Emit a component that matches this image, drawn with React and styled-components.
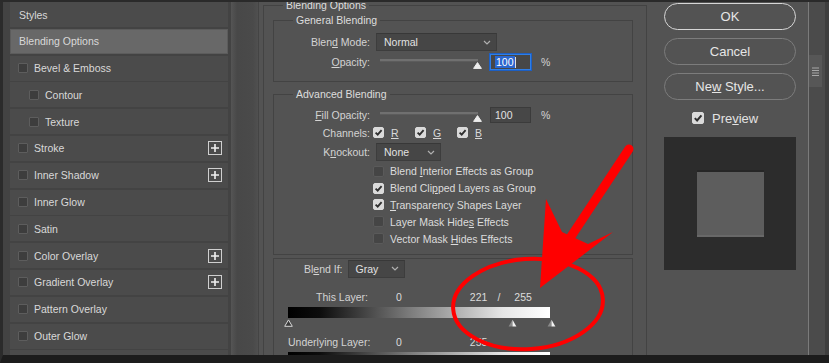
import React from 'react';
import styled, { createGlobalStyle } from 'styled-components';

const GlobalStyle = createGlobalStyle`
  html, body {
    margin: 0;
    padding: 0;
    background: #1b1b1b;
  }
  body {
    font-family: "Liberation Sans", Arial, sans-serif;
  }
`;

// whole dialog, cut by the screenshot on every side
const Frame = styled.div`
  position: relative;
  width: 826px;
  height: 353px;
  border-top: 2px solid #2a2a2a;
  border-left: 3px solid #2b2b2b;
  border-bottom: 8px solid #1c1c1c;
  background: #535353;
  display: flex;
  overflow: hidden;
  font-size: 10.5px;
  color: #d9d9d9;
`;

// left list of layer styles
const StylesPanel = styled.div`
  width: 228px;
  flex: none;
  box-sizing: border-box;
  padding: 0 3px 0 7px;
  background: #434343;
  display: flex;
  flex-direction: column;
  gap: 1.8px;
`;

const StyleRow = styled.div`
  flex: none;
  height: 25px;
  box-sizing: border-box;
  display: flex;
  align-items: center;
  gap: 6px;
  padding: 0 5px 0 ${p => (p.$indent ? 18 : p.$plain ? 8 : 7)}px;
  background: ${p => (p.$active ? '#686868' : '#4b4b4b')};
  border: 1px solid ${p => (p.$active ? '#5c5c5c' : '#4b4b4b')};
  white-space: nowrap;
`;

const StyleCheck = styled.span`
  width: 10px;
  height: 10px;
  box-sizing: border-box;
  flex: none;
  background: #3d3d3d;
  border: 1px solid #5d5d5d;
  border-radius: 1px;
`;

const PlusBox = styled.span`
  margin-left: auto;
  width: 14px;
  height: 14px;
  box-sizing: border-box;
  border: 1px solid #cfcfcf;
  display: flex;
  align-items: center;
  justify-content: center;
`;

const Gutter = styled.div`
  width: 32px;
  flex: none;
  background: linear-gradient(
    to right,
    #555555 0,
    #484848 6px,
    #4a4a4a 22px,
    #505050 27px,
    #444444 27px,
    #444444 28px,
    #535353 28px
  );
`;

// middle column with the blending groups
const Options = styled.div`
  width: 384px;
  flex: none;
  overflow: hidden;
`;

const Group = styled.fieldset`
  margin: ${p => p.$mt || 0}px 0 0;
  padding: ${p => p.$pad || '0'};
  border: 1px solid #434343;
  min-width: 0;
`;

const GroupTitle = styled.legend`
  margin-left: ${p => p.$ml}px;
  padding: 0 3px;
  line-height: 12px;
  color: #dedede;
`;

const FieldRow = styled.div`
  display: flex;
  align-items: center;
  height: ${p => p.$h}px;
  white-space: nowrap;
`;

const FieldLabel = styled.span`
  width: 96px;
  flex: none;
  text-align: right;
  margin-right: ${p => (p.$gap === undefined ? 6 : p.$gap)}px;
  color: #d4d4d4;
`;

const U = styled.span`
  text-decoration: underline;
  text-underline-offset: 1px;
`;

const SelectBox = styled.div`
  width: ${p => p.$w}px;
  height: 18px;
  flex: none;
  box-sizing: border-box;
  background: #464646;
  border: 1px solid #3d3d3d;
  border-top-color: #383838;
  display: flex;
  align-items: center;
  justify-content: space-between;
  padding: 0 5px 0 7px;
  color: #e2e2e2;
`;

const Slider = styled.div`
  width: 98px;
  flex: none;
  margin: 3px 0 0 4px;
  display: flex;
  flex-direction: column;
  align-items: flex-end;
`;

const Track = styled.div`
  align-self: stretch;
  height: 2px;
  background: #707070;
  border-bottom: 1px solid #5c5c5c;
`;

const Thumb = styled.svg`
  display: block;
  margin-right: -4px;
`;

const NumberBox = styled.div`
  width: 41px;
  height: 16px;
  flex: none;
  box-sizing: border-box;
  margin-left: 12px;
  padding-left: 4px;
  background: #474747;
  border: 1px solid ${p => (p.$focus ? '#2f7ee6' : '#3b3b3b')};
  box-shadow: ${p => (p.$focus ? '0 0 0 1px #1c5fc4' : 'none')};
  display: flex;
  align-items: center;
  color: #e2e2e2;
`;

const Selected = styled.span`
  background: #2b67cf;
  color: #ffffff;
  padding: 0 1px;
  line-height: 12px;
`;

const Caret = styled.span`
  width: 1px;
  height: 11px;
  background: #e0e0e0;
`;

const Percent = styled.span`
  margin-left: 10px;
  color: #d4d4d4;
`;

const Channel = styled.span`
  width: 42px;
  flex: none;
  display: flex;
  align-items: center;
  gap: 7px;
`;

const CheckList = styled.div`
  padding-left: 99px;
  display: flex;
  flex-direction: column;
`;

const CheckRow = styled.div`
  height: 16.8px;
  display: flex;
  align-items: center;
  gap: 6px;
  white-space: nowrap;
  color: #dcdcdc;
`;

const Box = styled.span`
  width: ${p => p.$size || 11}px;
  height: ${p => p.$size || 11}px;
  flex: none;
  box-sizing: border-box;
  border-radius: 2px;
  background: ${p => (p.$on ? '#dadada' : '#454545')};
  border: 1px solid ${p => (p.$on ? '#dadada' : '#5a5a5a')};
  display: flex;
  align-items: center;
  justify-content: center;
`;

const BlendIfRow = styled.div`
  height: 18px;
  display: flex;
  align-items: center;
  gap: 5px;
  padding-left: 16px;
  color: #d4d4d4;
`;

const LayerRow = styled.div`
  height: 14px;
  margin-top: ${p => p.$mt}px;
  display: flex;
  align-items: center;
  white-space: nowrap;
  color: #d4d4d4;
`;

const LayerLabel = styled.span`
  width: 80px;
  flex: none;
  text-align: right;
`;

const Value = styled.span`
  margin-left: ${p => p.$ml}px;
  color: #dcdcdc;
`;

const GradientBar = styled.div`
  width: 262px;
  height: 11px;
  margin-top: 3px;
  background: linear-gradient(
    to right,
    #000000 0%,
    #0c0c0c 12%,
    #7a7a7a 46%,
    #e6e6e6 82%,
    #ffffff 100%
  );
`;

const ThumbRow = styled.div`
  height: 10px;
  display: flex;
  align-items: center;
`;

const Tri = styled.svg`
  display: block;
  flex: none;
  margin-left: ${p => p.$ml}px;
`;

// right column: buttons and preview
const Side = styled.div`
  width: 161px;
  flex: none;
  box-sizing: border-box;
  padding: 1px 12px 0 17px;
  display: flex;
  flex-direction: column;
`;

const PillButton = styled.div`
  height: 27px;
  box-sizing: border-box;
  border-radius: 14px;
  border: ${p => (p.$primary ? '1.5px solid #d6d6d6' : '1px solid #7c7c7c')};
  display: flex;
  align-items: center;
  justify-content: center;
  font-size: 13px;
  color: #e6e6e6;

  & + & {
    margin-top: 8px;
  }
`;

const PreviewRow = styled.div`
  height: 20px;
  margin-top: 8px;
  padding-left: 28px;
  display: flex;
  align-items: center;
  gap: 8px;
  font-size: 13px;
  color: #e2e2e2;
`;

const Swatch = styled.div`
  height: 133px;
  margin-top: 9px;
  background: #2c2c2c;
  display: flex;
  align-items: center;
  justify-content: center;
`;

const SwatchSquare = styled.div`
  width: 67px;
  height: 67px;
  box-sizing: border-box;
  background: #5d5d5d;
  border-top: 2px solid #262626;
  border-bottom: 2px solid #686868;
`;

const EdgeStrip = styled.div`
  width: 21px;
  flex: none;
  box-sizing: border-box;
  border-left: 1px solid #7b7b7b;
  background: #4b4b4b;
  box-shadow: inset -4px 0 0 #3e3e3e;
`;

const Grip = styled.div`
  margin-top: 53px;
  width: 13px;
  height: 32px;
  background: #575757;
  display: flex;
  align-items: center;
  justify-content: center;
`;

const Annotation = styled.svg`
  position: absolute;
  top: 0;
  left: 0;
  pointer-events: none;
`;

const Chevron = () => (
  <svg width="8" height="5" viewBox="0 0 8 5">
    <path d="M1 1 L4 4 L7 1" fill="none" stroke="#b0b0b0" strokeWidth="1.2" />
  </svg>
);

const Tick = ({ size = 11 }) => (
  <svg width={size - 2} height={size - 2} viewBox="0 0 9 9">
    <path d="M1.6 4.6 L3.7 6.7 L7.6 2.2" fill="none" stroke="#2e2e2e" strokeWidth="1.8" />
  </svg>
);

const Plus = () => (
  <svg width="8" height="8" viewBox="0 0 8 8">
    <path d="M4 0 V8 M0 4 H8" stroke="#f0f0f0" strokeWidth="1.6" />
  </svg>
);

const SplitTri = ({ ml }) => (
  <Tri $ml={ml} width="9" height="8" viewBox="0 0 9 8">
    <path d="M4.5 0.8 L0.6 7.4 L4.5 7.4 Z" fill="#8a8a8a" />
    <path d="M4.5 0.8 L8.4 7.4 L4.5 7.4 Z" fill="#f2f2f2" />
  </Tri>
);

const styleItems = [
  { label: 'Bevel & Emboss' },
  { label: 'Contour', indent: true },
  { label: 'Texture', indent: true },
  { label: 'Stroke', plus: true },
  { label: 'Inner Shadow', plus: true },
  { label: 'Inner Glow' },
  { label: 'Satin' },
  { label: 'Color Overlay', plus: true },
  { label: 'Gradient Overlay', plus: true },
  { label: 'Pattern Overlay' },
  { label: 'Outer Glow' },
  { label: 'Drop Shadow', plus: true },
];

export default function App() {
  return (
    <>
      <GlobalStyle />
      <Frame>
        <StylesPanel>
          <StyleRow $plain>Styles</StyleRow>
          <StyleRow $plain $active>Blending Options</StyleRow>
          {styleItems.map(item => (
            <StyleRow key={item.label} $indent={item.indent}>
              <StyleCheck />
              {item.label}
              {item.plus && (
                <PlusBox>
                  <Plus />
                </PlusBox>
              )}
            </StyleRow>
          ))}
        </StylesPanel>

        <Gutter />

        <Options>
          <Group $mt={-3} $pad="3px 13px 0 9px">
            <GroupTitle $ml={10}>Blending Options</GroupTitle>

            <Group $mt={0} $pad="6px 0 9px">
              <GroupTitle $ml={19}>General Blending</GroupTitle>
              <FieldRow $h={20}>
                <FieldLabel>Blen<U>d</U> Mode:</FieldLabel>
                <SelectBox $w={121}>
                  Normal
                  <Chevron />
                </SelectBox>
              </FieldRow>
              <FieldRow $h={20}>
                <FieldLabel><U>O</U>pacity:</FieldLabel>
                <Slider>
                  <Track />
                  <Thumb width="9" height="7" viewBox="0 0 9 7">
                    <path d="M4.5 0.6 L8.4 6.4 L0.6 6.4 Z" fill="#eeeeee" stroke="#eeeeee" strokeLinejoin="round" />
                  </Thumb>
                </Slider>
                <NumberBox $focus>
                  <Selected>100</Selected>
                  <Caret />
                </NumberBox>
                <Percent>%</Percent>
              </FieldRow>
            </Group>

            <Group $mt={6} $pad="6px 0 7px">
              <GroupTitle $ml={19}>Advanced Blending</GroupTitle>
              <FieldRow $h={18}>
                <FieldLabel><U>F</U>ill Opacity:</FieldLabel>
                <Slider>
                  <Track />
                  <Thumb width="9" height="7" viewBox="0 0 9 7">
                    <path d="M4.5 0.6 L8.4 6.4 L0.6 6.4 Z" fill="#eeeeee" stroke="#eeeeee" strokeLinejoin="round" />
                  </Thumb>
                </Slider>
                <NumberBox>100</NumberBox>
                <Percent>%</Percent>
              </FieldRow>
              <FieldRow $h={17}>
                <FieldLabel $gap={3}>Channels:</FieldLabel>
                {['R', 'G', 'B'].map(c => (
                  <Channel key={c}>
                    <Box $on>
                      <Tick />
                    </Box>
                    <U>{c}</U>
                  </Channel>
                ))}
              </FieldRow>
              <FieldRow $h={22}>
                <FieldLabel>K<U>n</U>ockout:</FieldLabel>
                <SelectBox $w={65}>
                  None
                  <Chevron />
                </SelectBox>
              </FieldRow>
              <CheckList>
                <CheckRow>
                  <Box />
                  <span>Blend <U>I</U>nterior Effects as Group</span>
                </CheckRow>
                <CheckRow>
                  <Box $on>
                    <Tick />
                  </Box>
                  <span>Blend Cli<U>p</U>ped Layers as Group</span>
                </CheckRow>
                <CheckRow>
                  <Box $on>
                    <Tick />
                  </Box>
                  <span><U>T</U>ransparency Shapes Layer</span>
                </CheckRow>
                <CheckRow>
                  <Box />
                  <span>Layer Mask Hide<U>s</U> Effects</span>
                </CheckRow>
                <CheckRow>
                  <Box />
                  <span>Vector Mask <U>H</U>ides Effects</span>
                </CheckRow>
              </CheckList>
            </Group>

            <Group $mt={3} $pad="1px 0 20px 14px">
              <BlendIfRow>
                <span>Bl<U>e</U>nd If:</span>
                <SelectBox $w={57}>
                  Gray
                  <Chevron />
                </SelectBox>
              </BlendIfRow>
              <LayerRow $mt={12}>
                <LayerLabel>This Layer:</LayerLabel>
                <Value $ml={28}>0</Value>
                <Value $ml={68}>221</Value>
                <Value $ml={10}>/</Value>
                <Value $ml={14}>255</Value>
              </LayerRow>
              <GradientBar />
              <ThumbRow>
                <Tri $ml={-4} width="9" height="8" viewBox="0 0 9 8">
                  <path d="M4.5 0.9 L0.7 7.3 L8.3 7.3 Z" fill="#3a3a3a" stroke="#d8d8d8" strokeWidth="1" strokeLinejoin="round" />
                </Tri>
                <SplitTri ml={215} />
                <SplitTri ml={30} />
              </ThumbRow>
              <LayerRow $mt={7}>
                <LayerLabel>Underlying Layer:</LayerLabel>
                <Value $ml={28}>0</Value>
                <Value $ml={68}>255</Value>
              </LayerRow>
              <GradientBar />
            </Group>
          </Group>
        </Options>

        <Side>
          <PillButton $primary>OK</PillButton>
          <PillButton>Cancel</PillButton>
          <PillButton>
            <span>Ne<U>w</U> Style...</span>
          </PillButton>
          <PreviewRow>
            <Box $on $size={12}>
              <Tick size={12} />
            </Box>
            <span>Pre<U>v</U>iew</span>
          </PreviewRow>
          <Swatch>
            <SwatchSquare />
          </Swatch>
        </Side>

        <EdgeStrip>
          <Grip>
            <svg width="7" height="9" viewBox="0 0 7 9">
              <path d="M0 1 H7 M0 3.5 H7 M0 6 H7 M0 8.5 H7" stroke="#a8a8a8" strokeWidth="1" />
            </svg>
          </Grip>
        </EdgeStrip>

        <Annotation width="826" height="353" viewBox="3 2 826 353">
          <ellipse
            cx="528"
            cy="304"
            rx="75"
            ry="45"
            transform="rotate(-4 528 304)"
            fill="none"
            stroke="#ff0000"
            strokeWidth="4"
          />
          <line x1="629" y1="149" x2="570" y2="238" stroke="#ff0000" strokeWidth="9" strokeLinecap="round" />
          <polygon points="540,288 546,199 562,232 588,244 613,232" fill="#ff0000" />
        </Annotation>
      </Frame>
    </>
  );
}
